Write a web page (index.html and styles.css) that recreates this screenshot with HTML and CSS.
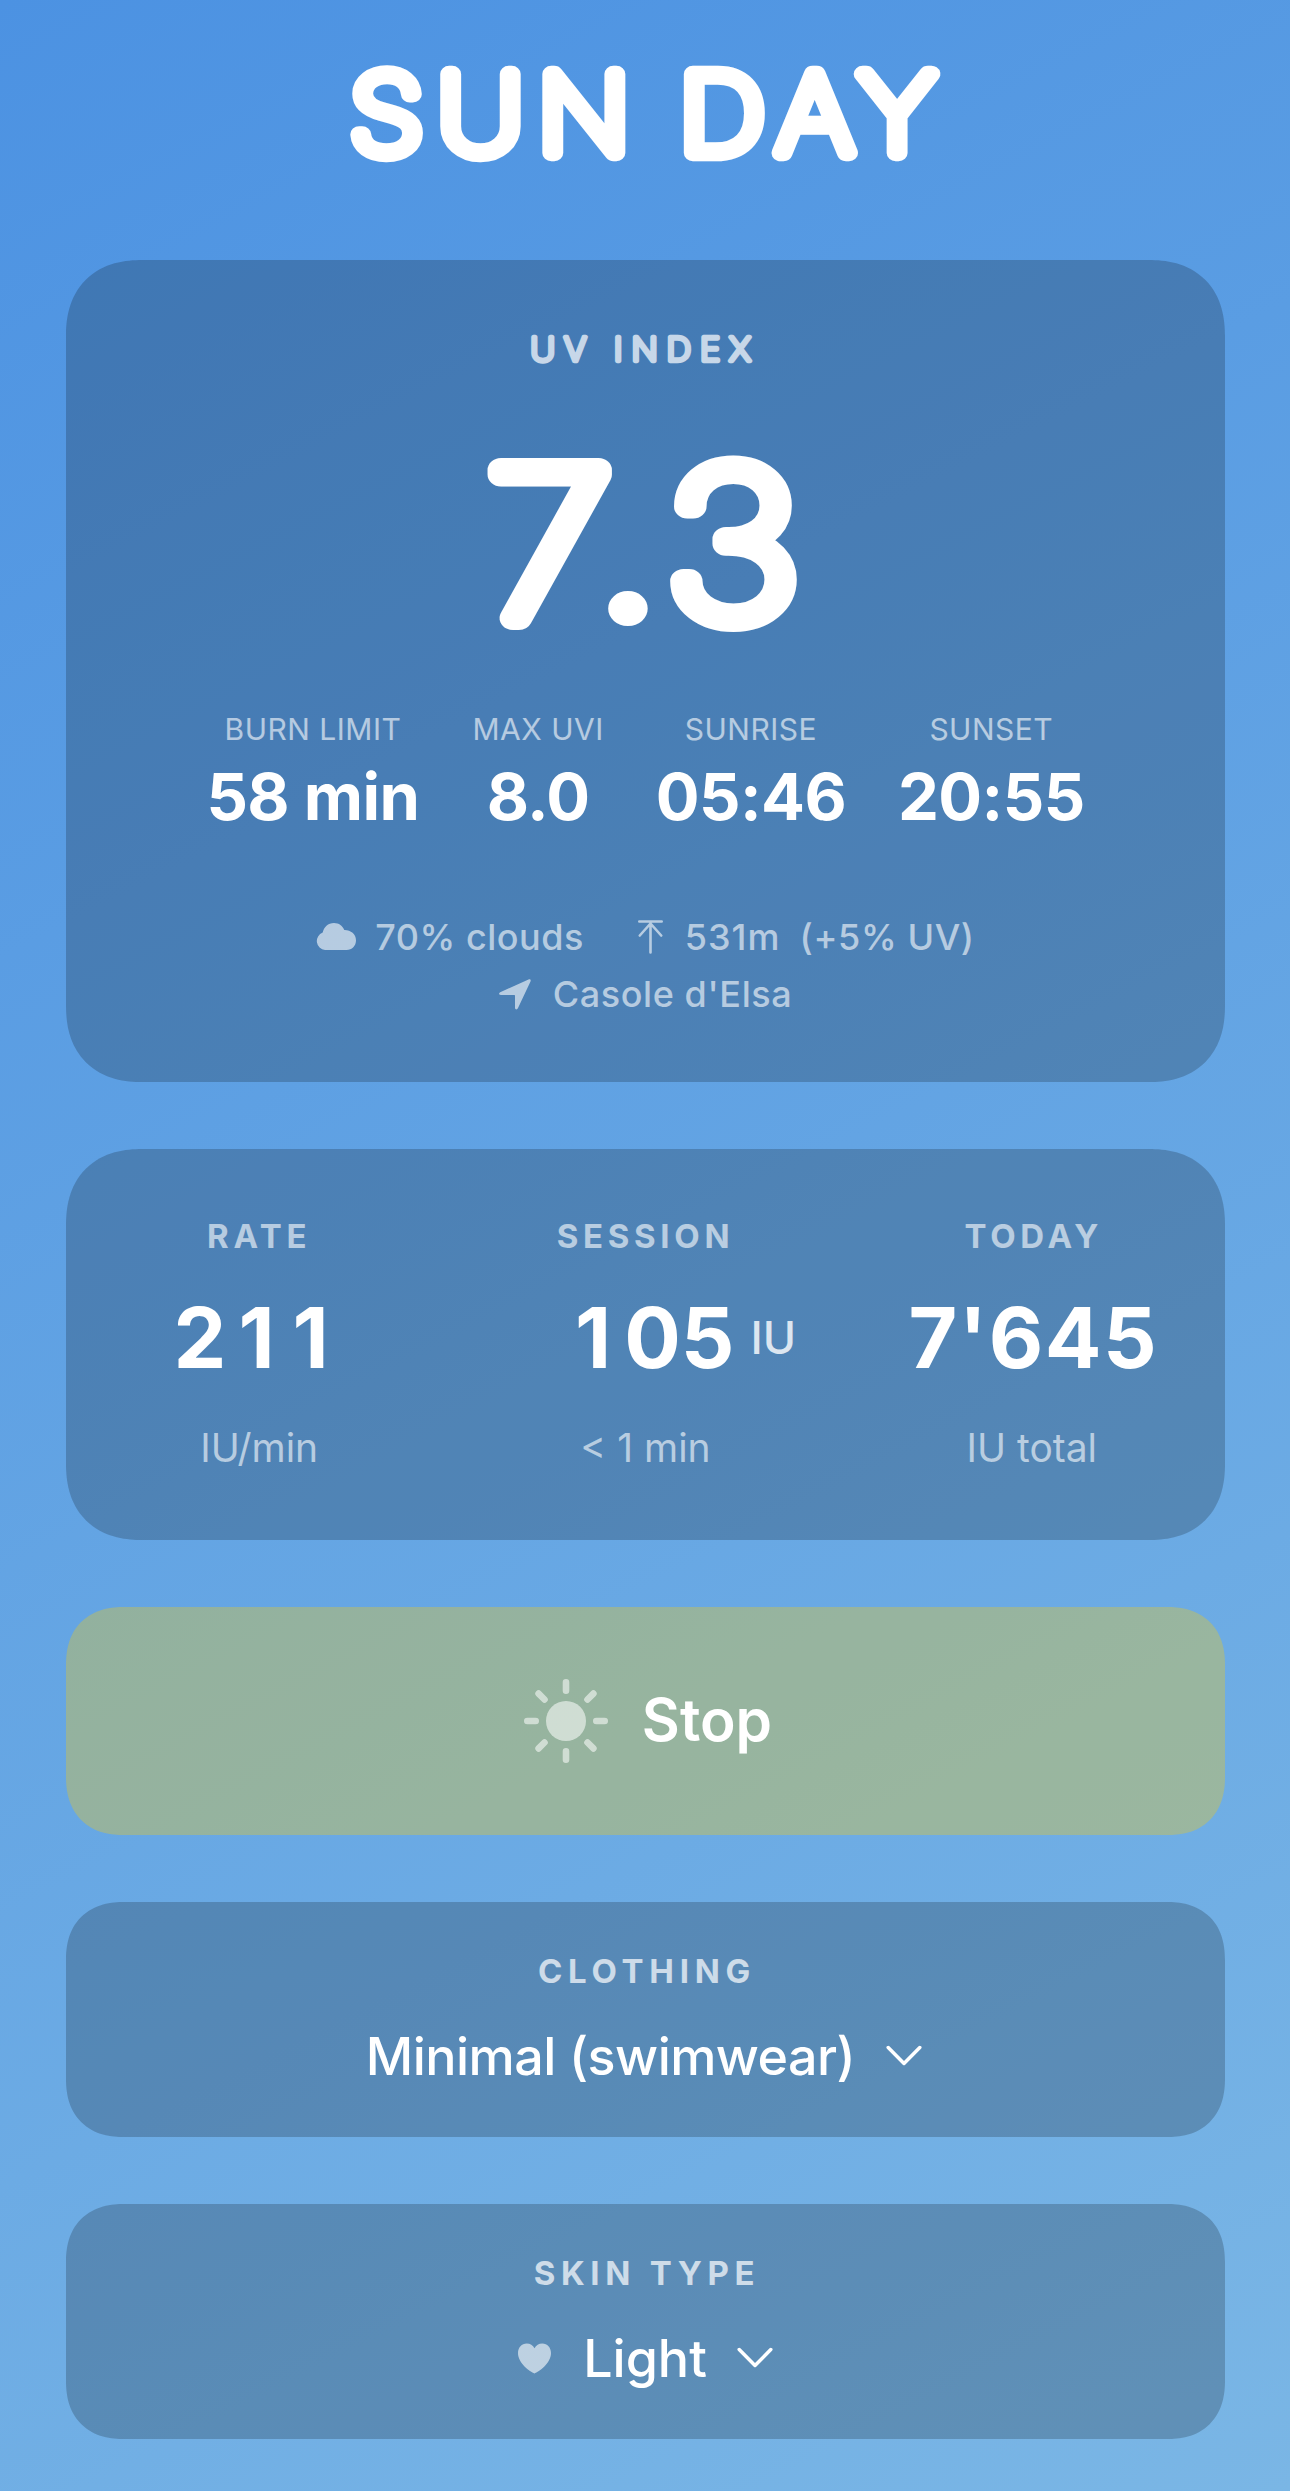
FILE: index.html
```html
<!doctype html>
<html lang="en">
<head>
  <meta charset="UTF-8">
  <meta name="viewport" content="width=device-width, initial-scale=1.0">
  <title>Sun Day</title>
  <link rel="stylesheet" href="styles.css">
</head>
<body>
  <h1 class="title">
    <svg class="rounded" width="1159" height="200" viewBox="66 0 1159 200">
      <text class="title-text" transform="translate(650 152.5) scale(1.1 1)">SUN DAY</text>
    </svg>
  </h1>

  <div class="card uv">
    <svg class="rounded" width="400" height="56" viewBox="0 0 400 56">
      <text class="uv-label" transform="translate(199 41) scale(1.04 1)">UV INDEX</text>
    </svg>
    <svg class="rounded uv-number" width="500" height="280" viewBox="0 0 500 280">
      <text class="uv-value" transform="translate(253 222) scale(1.13 1)">7<tspan class="dot" dx="-26" dy="3">.</tspan><tspan dy="-3">3</tspan></text>
    </svg>
    <div class="stats">
      <div class="stat">
        <div class="stat-label">BURN LIMIT</div>
        <div class="stat-value">58 min</div>
      </div>
      <div class="stat">
        <div class="stat-label">MAX UVI</div>
        <div class="stat-value">8.0</div>
      </div>
      <div class="stat">
        <div class="stat-label">SUNRISE</div>
        <div class="stat-value">05:46</div>
      </div>
      <div class="stat">
        <div class="stat-label">SUNSET</div>
        <div class="stat-value">20:55</div>
      </div>
    </div>
    <div class="info">
      <svg class="cloud" width="40" height="27" viewBox="0 0 40 27">
        <path fill="currentColor" d="M9 27a9 9 0 0 1-2.300-17.400C7.800 4.200 12 0 18 0c5 0 8.700 2.800 10.300 7C34.500 6.800 40 11 40 17.200 40 22.800 36 27 30.500 27z"/>
      </svg>
      <span class="clouds">70% clouds</span>
      <svg class="altitude" width="25" height="34" viewBox="0 0 25 34" fill="none" stroke="currentColor" stroke-width="2.600" stroke-linecap="round" stroke-linejoin="round">
        <path d="M1.300 1.500h22.400M12.500 3v29.500M1.800 15.500 12.500 3.500l10.700 12"/>
      </svg>
      <span class="meters">531m</span>
      <span>(+5% UV)</span>
    </div>
    <div class="info">
      <svg class="location" width="32" height="31" viewBox="0 0 32 31">
        <path fill="currentColor" d="M1.200 13.300 29.500.500c1.600-.7 2.700.4 2 2L18.900 29.300c-.8 1.700-2.900 1.400-2.900-.6V16.600c0-.5-.2-.7-.7-.7H1.800c-2 0-2.400-1.800-.6-2.600z"/>
      </svg>
      <span>Casole d'Elsa</span>
    </div>
  </div>

  <div class="card vitamin">
    <div class="column">
      <div class="label dim">RATE</div>
      <div class="number rate"><span class="first">2</span>11</div>
      <div class="sub">IU/min</div>
    </div>
    <div class="column">
      <div class="label dim">SESSION</div>
      <div class="number session"><span class="first">1</span>05<span class="unit">IU</span></div>
      <div class="sub">&lt; 1 min</div>
    </div>
    <div class="column">
      <div class="label dim today">TODAY</div>
      <div class="number total">7'645</div>
      <div class="sub">IU total</div>
    </div>
  </div>

  <div class="card stop">
    <svg class="sun" width="84" height="84" viewBox="-42 -42 84 84" stroke="currentColor" stroke-width="6.600" stroke-linecap="round">
      <circle r="20" fill="currentColor" stroke="none"/>
      <path d="M0-38.700v8.400M0 38.700v-8.400M-38.700 0h8.400M38.700 0h-8.400M-27.400-27.400l5.900 5.900M27.400-27.400l-5.900 5.900M-27.400 27.400l5.900-5.900M27.400 27.400l-5.900-5.900"/>
    </svg>
    <span class="stop-text">Stop</span>
  </div>

  <div class="card picker">
    <div class="label">CLOTHING</div>
    <div class="choice">
      <span class="clothing">Minimal (swimwear)</span>
      <svg class="chevron" width="36" height="22" viewBox="0 0 36 22">
        <path d="M2.200 2.500 18 18.500l15.800-16"/>
      </svg>
    </div>
  </div>

  <div class="card picker">
    <div class="label">SKIN TYPE</div>
    <div class="choice">
      <svg class="heart" width="33" height="31" viewBox="0 0 33 31">
        <path fill="currentColor" d="M16.500 30.500C12 28.500 0 20.500 0 10 0 4.500 3.700.500 8.700.500c3.500 0 6.200 1.900 7.800 4.800C18.100 2.400 20.800.500 24.300.500 29.300.500 33 4.500 33 10c0 10.500-12 18.500-16.500 20.500z"/>
      </svg>
      <span>Light</span>
      <svg class="chevron near" width="36" height="22" viewBox="0 0 36 22">
        <path d="M2.200 2.500 18 18.500l15.800-16"/>
      </svg>
    </div>
  </div>
</body>
</html>
```
FILE: styles.css
```css
body {
  margin: 0;
  padding: 0 65px 51px 66px;
  box-sizing: border-box;
  height: 2491px;
  font-family: Inter, "Liberation Sans", sans-serif;
  color: white;
  background: linear-gradient(153deg, #4c92e2, #7ab6e5);
  overflow: hidden;
}
.title {
  margin: 0 0 60px;
  height: 200px;
}
.rounded {
  display: block;
}
/* outlined strokes give the heavy text its round ends */
.rounded text {
  fill: white;
  stroke: white;
  stroke-linejoin: round;
  stroke-linecap: round;
  text-anchor: middle;
}
.title-text {
  font-size: 108px;
  font-weight: 100;
  letter-spacing: 13.5px;
  word-spacing: -12px;
  stroke-width: 16.5px;
}
.card {
  box-sizing: border-box;
  border-radius: 66px;
  background: rgba(0, 0, 0, 0.2);
  margin-bottom: 67px;
}
.uv {
  display: flex;
  flex-direction: column;
  align-items: center;
  height: 822px;
  padding-top: 60px;
}
.rounded .uv-label {
  font-size: 33px;
  font-weight: 200;
  letter-spacing: 8.5px;
  stroke-width: 4.5px;
  opacity: 0.7;
}
.uv-number {
  margin-top: 20px;
}
.rounded .uv-value {
  font-size: 204px;
  font-weight: 100;
  letter-spacing: 10px;
  stroke-width: 24px;
}
.dot {
  font-weight: 400;
  letter-spacing: 4px;
  stroke-width: 8px;
}
.stats {
  display: flex;
  gap: 52px;
  margin-top: 33px;
  margin-bottom: 75px;
}
.stat {
  text-align: center;
}
.stat:first-child {
  margin-right: 1px;
}
.stat-label {
  font-size: 30px;
  line-height: 40px;
  letter-spacing: 0.5px;
  margin-bottom: 12px;
  opacity: 0.6;
}
.stat-value {
  font-size: 65px;
  line-height: 72px;
  font-weight: 700;
  letter-spacing: -0.6px;
}
.info {
  display: flex;
  align-items: center;
  height: 57.5px;
  font-size: 36px;
  font-weight: 500;
  letter-spacing: 0.6px;
  color: rgba(255, 255, 255, 0.6);
}
.cloud {
  margin-right: 19px;
}
.clouds {
  margin-right: 54px;
  letter-spacing: 0.5px;
}
.altitude {
  margin-right: 22px;
}
.meters {
  margin-right: 19px;
  letter-spacing: 1px;
}
.location {
  margin-right: 22px;
}
.vitamin {
  display: flex;
  height: 391px;
  padding-top: 67px;
}
.column {
  flex: 1;
  text-align: center;
}
.label {
  font-size: 33px;
  line-height: 40px;
  font-weight: 700;
  letter-spacing: 5.7px;
  opacity: 0.7;
}
.dim {
  letter-spacing: 4.7px;
  opacity: 0.6;
}
.today {
  padding-left: 4px;
}
.number {
  margin: 32px 0 36px;
  font-size: 84px;
  line-height: 100px;
  font-weight: 700;
  letter-spacing: 1.5px;
  white-space: nowrap;
}
.rate {
  padding-left: 2px;
  letter-spacing: 18px;
}
.rate .first {
  letter-spacing: 12px;
}
.session {
  display: flex;
  justify-content: center;
  align-items: center;
  padding-left: 80px;
  letter-spacing: 0;
}
.session .first {
  letter-spacing: 13px;
}
.total {
  padding-left: 3px;
}
.unit {
  margin-left: 16px;
  font-size: 45px;
  font-weight: 500;
  opacity: 0.8;
}
.sub {
  font-size: 39px;
  line-height: 48px;
  font-weight: 400;
  color: rgba(255, 255, 255, 0.6);
}
.stop {
  display: flex;
  justify-content: center;
  align-items: center;
  height: 228px;
  padding-left: 5px;
  margin-bottom: 66.500px;
  border-radius: 50px;
  background: rgba(255, 204, 0, 0.3);
  font-size: 58.500px;
  font-weight: 600;
}
.stop-text {
  padding-bottom: 4px;
}
.sun {
  margin-right: 34px;
  opacity: 0.55;
}
.picker {
  height: 235.500px;
  padding-top: 49px;
  margin-bottom: 66.500px;
  border-radius: 50px;
  text-align: center;
}
.picker .label {
  padding-left: 3px;
}
.choice {
  display: flex;
  justify-content: center;
  align-items: center;
  height: 64px;
  margin-top: 33.500px;
  font-size: 52px;
  font-weight: 500;
}
.clothing {
  margin-left: -3px;
  letter-spacing: -0.55px;
}
.chevron {
  margin-left: 31px;
  fill: none;
  stroke: white;
  stroke-width: 3.5px;
  stroke-linecap: round;
  stroke-linejoin: round;
}
.near {
  margin-left: 30px;
}
.heart {
  margin-right: 32px;
  opacity: 0.6;
}
/* smoother corners where the browser knows them */
@supports (corner-shape: superellipse(1.2)) {
  .card {
    border-radius: 76px;
    corner-shape: superellipse(1.2);
  }
  .stop,
  .picker {
    border-radius: 58px;
  }
}
```
